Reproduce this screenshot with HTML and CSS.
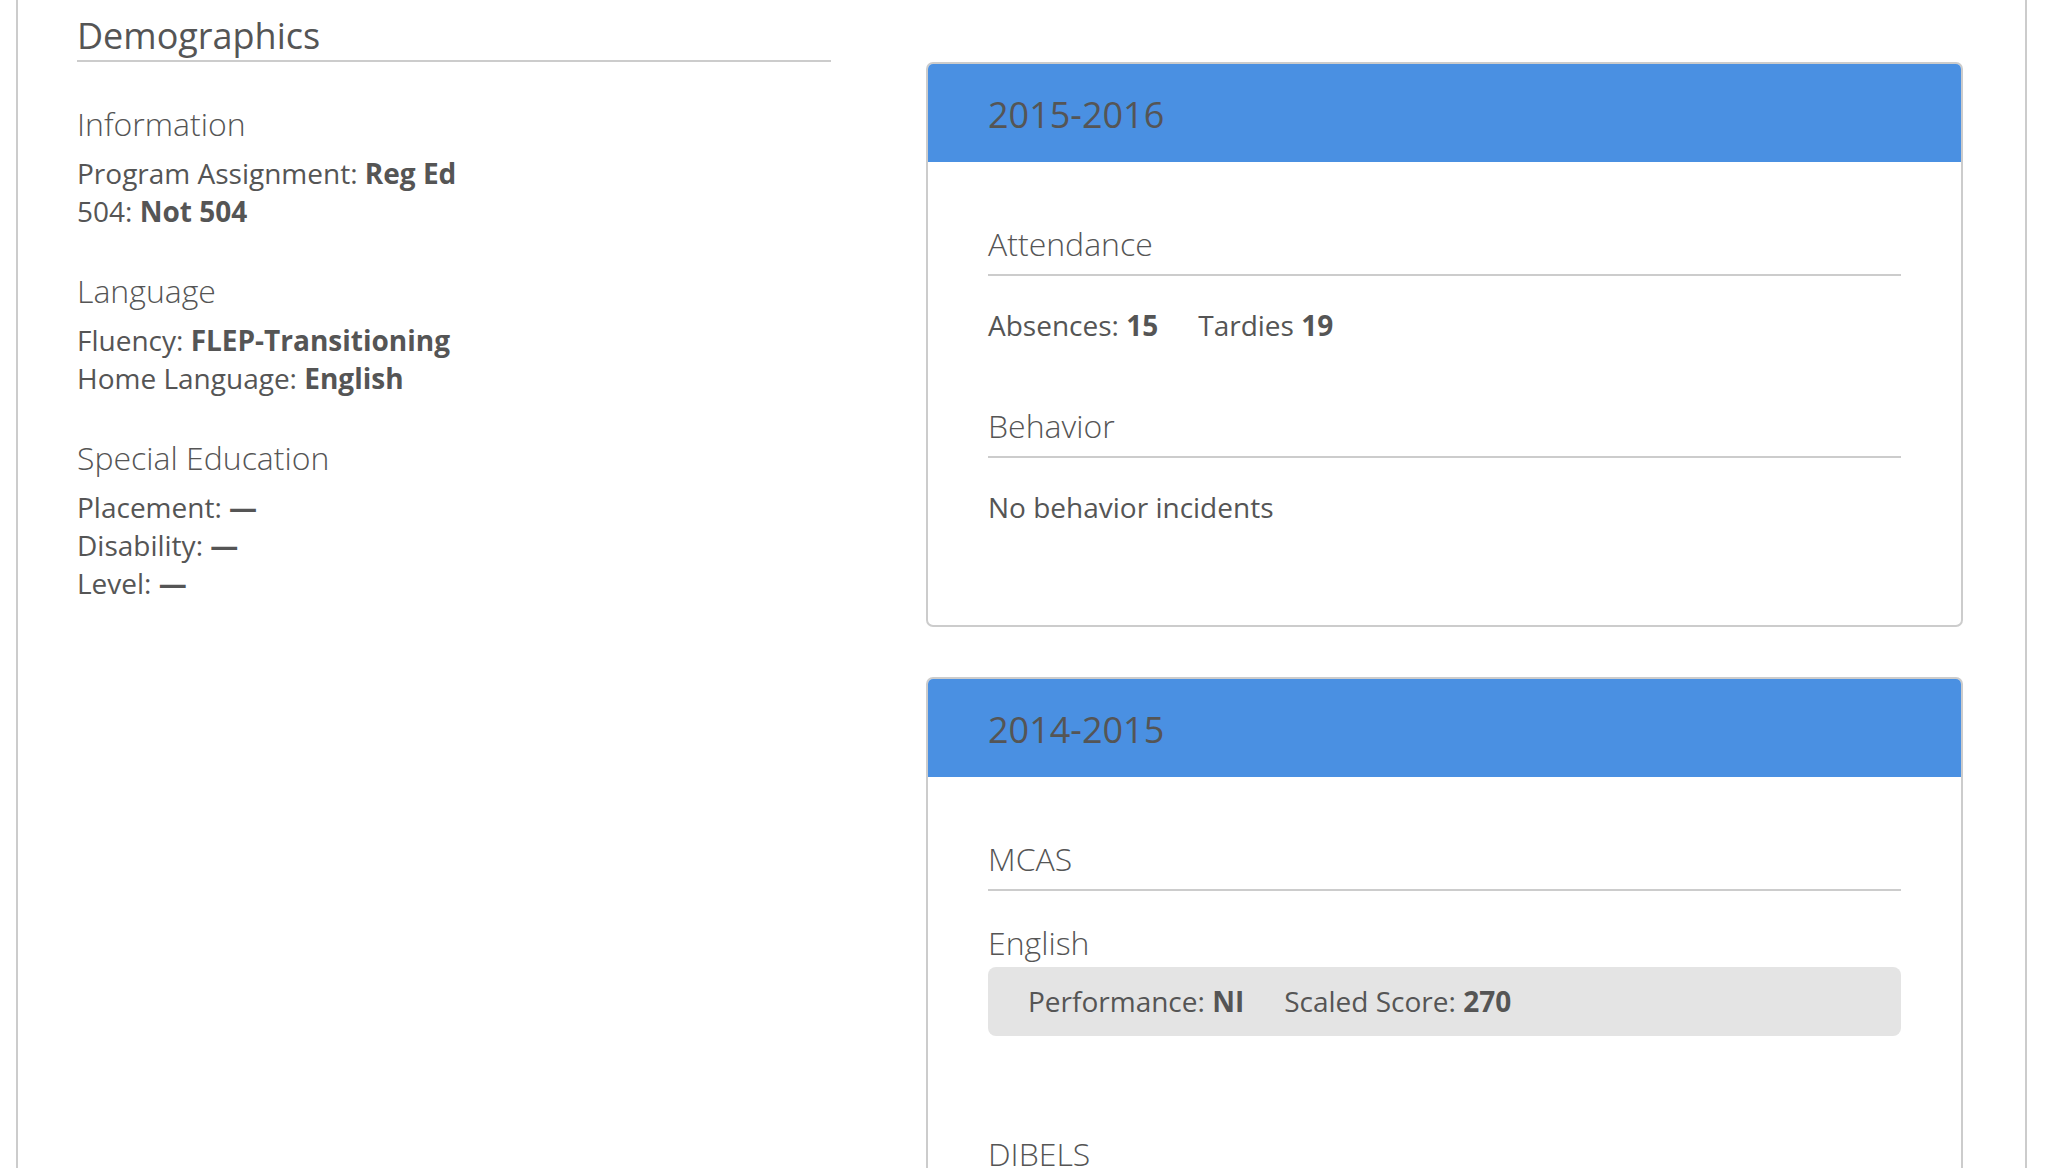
FILE: index.html
```html
<!DOCTYPE html>
<html lang="en">
<head>
<meta charset="utf-8">
<title>Student Profile</title>
<link rel="stylesheet" href="styles.css">
</head>
<body>
<div class="page">
  <div class="layout">
    <section class="demographics">
      <h2 class="page-title">Demographics</h2>
      <div class="info-group">
        <h3 class="group-title">Information</h3>
        <div class="line">Program Assignment: <b>Reg Ed</b></div>
        <div class="line">504: <b>Not 504</b></div>
      </div>
      <div class="info-group">
        <h3 class="group-title">Language</h3>
        <div class="line">Fluency: <b>FLEP-Transitioning</b></div>
        <div class="line">Home Language: <b>English</b></div>
      </div>
      <div class="info-group">
        <h3 class="group-title">Special Education</h3>
        <div class="line">Placement: <b>—</b></div>
        <div class="line">Disability: <b>—</b></div>
        <div class="line">Level: <b>—</b></div>
      </div>
    </section>

    <section class="years">
      <article class="card">
        <header class="card-header">2015-2016</header>
        <div class="card-body">
          <div class="section">
            <h3 class="section-title">Attendance</h3>
            <div class="line"><span class="stat">Absences: <b>15</b></span><span class="stat">Tardies <b>19</b></span></div>
          </div>
          <div class="section">
            <h3 class="section-title">Behavior</h3>
            <div class="line">No behavior incidents</div>
          </div>
        </div>
      </article>

      <article class="card">
        <header class="card-header">2014-2015</header>
        <div class="card-body">
          <div class="section">
            <h3 class="section-title">MCAS</h3>
            <h4 class="subject">English</h4>
            <div class="score-box"><span class="stat">Performance: <b>NI</b></span><span class="stat">Scaled Score: <b>270</b></span></div>
          </div>
          <div class="section">
            <h3 class="section-title">DIBELS</h3>
            <div class="line">&nbsp;</div>
          </div>
        </div>
      </article>
    </section>
  </div>
</div>
</body>
</html>
```

FILE: styles.css
```css
html, body {
  margin: 0;
  padding: 0;
  background: #fff;
  height: 100%;
  overflow: hidden;
}

body {
  font-family: "Open Sans", "Noto Sans", sans-serif;
  color: #555;
  font-size: 28px;
}

.page {
  margin-left: 16px;
  width: 2007px;
  min-height: 100%;
  border-left: 2px solid #ccc;
  border-right: 2px solid #ccc;
}

.layout {
  display: flex;
  padding: 0 62px 0 59px;
  gap: 95px;
  align-items: flex-start;
}

.demographics {
  width: 754px;
  flex: none;
}

.page-title {
  margin: 12px 0 0;
  font-size: 36px;
  font-weight: 400;
  line-height: 48px;
  border-bottom: 2px solid #ccc;
}

.info-group {
  margin-top: 39px;
}

.page-title + .info-group {
  margin-top: 40px;
}

.group-title {
  margin: 0 0 8px;
  font-size: 32px;
  font-weight: 300;
  line-height: 44px;
}

.line {
  line-height: 38px;
}

b {
  font-weight: 700;
}

.years {
  flex: 1;
  margin-top: 62px;
  display: flex;
  flex-direction: column;
  gap: 50px;
}

.card {
  border: 2px solid #ccc;
  border-radius: 7px;
  overflow: hidden;
}

.card-header {
  background: #4a90e2;
  margin: -2px -2px 0;
  padding: 29px 62px 23px;
  font-size: 36px;
  line-height: 48px;
  border-radius: 7px 7px 0 0;
}

.card-body {
  padding: 0 60px 99px;
}

.section {
  margin-top: 62px;
}

.section-title {
  margin: 0;
  font-size: 32px;
  font-weight: 300;
  line-height: 40px;
  padding-bottom: 10px;
  border-bottom: 2px solid #ccc;
}

.section-title + .line {
  margin-top: 30px;
}

.stat {
  margin-right: 40px;
}

.subject {
  margin: 32px 0 0;
  font-size: 32px;
  font-weight: 300;
  line-height: 40px;
}

.score-box {
  margin: 4px 0 98px;
  background: #e4e4e4;
  border-radius: 8px;
  padding: 15px 40px 16px;
  line-height: 38px;
}
```
